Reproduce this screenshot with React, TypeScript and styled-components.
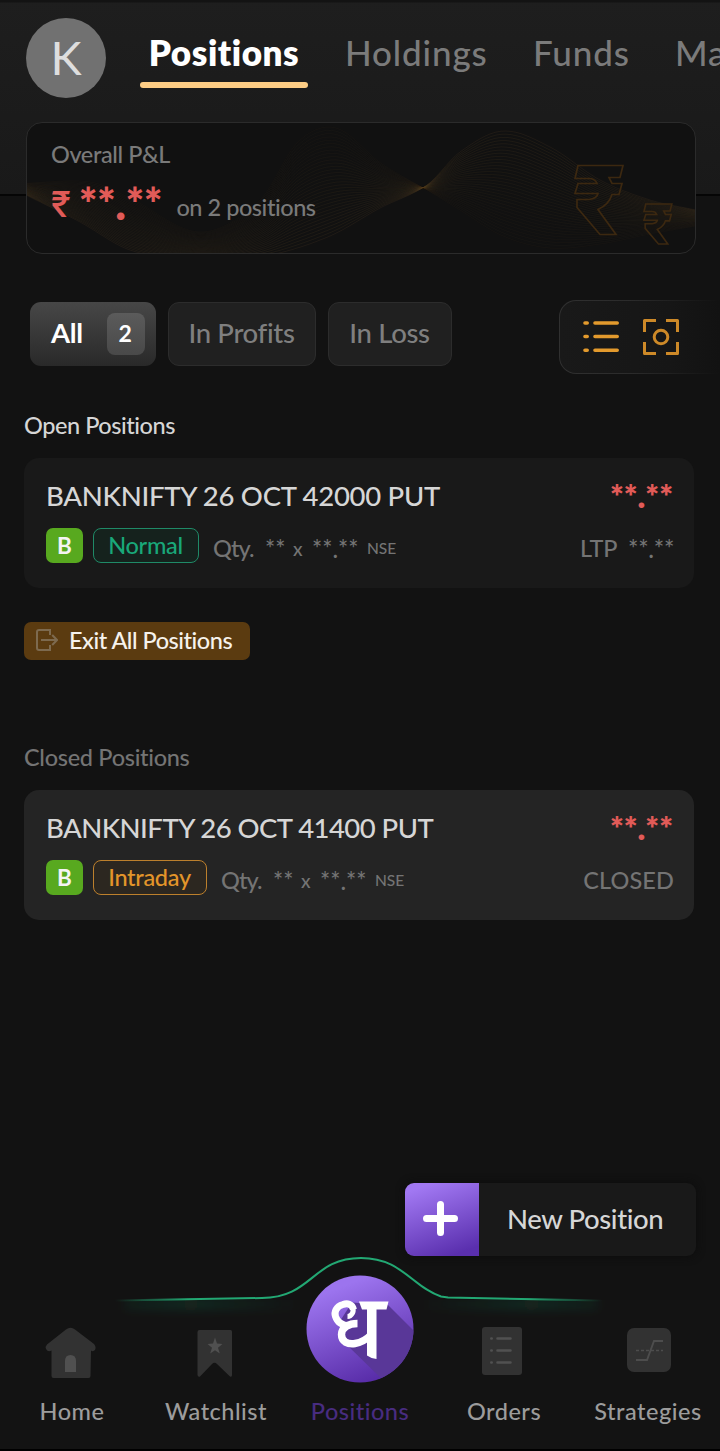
import React from "react";
import styled, { createGlobalStyle, css } from "styled-components";

const GlobalStyle = createGlobalStyle`
  * { box-sizing: border-box; }
  body { margin: 0; background: #121212; }
`;

const Screen = styled.main`
  width: 720px;
  height: 1451px;
  overflow: hidden;
  display: flex;
  flex-direction: column;
  border-bottom: 2px solid #000;
  font-family: Lato, Inter, "Liberation Sans", sans-serif;
  font-weight: 500;
  font-variant-ligatures: none;
  color: #d6d6d6;
  white-space: nowrap;
  background:
    linear-gradient(#131313, #131313 2px, transparent 3px) top / 100% 4px no-repeat,
    linear-gradient(#050505, #050505) 0 194px / 100% 2px no-repeat,
    linear-gradient(#1e1e1e, #191919) top / 100% 195px no-repeat,
    #121212;
`;

const TopBar = styled.header`
  display: flex;
  height: 122px;
  padding: 18px 0 0 26px;
`;

const Avatar = styled.div`
  flex: none;
  width: 80px;
  height: 80px;
  border-radius: 50%;
  background: #717171;
  color: #dedede;
  font-size: 47px;
  font-weight: 400;
  line-height: 79px;
  text-align: center;
`;

const Tabs = styled.nav`
  display: flex;
  margin-left: 34px;
`;

const Tab = styled.div<{ $width: number }>`
  flex: none;
  width: ${(p) => p.$width}px;
  height: 70px;
  padding-left: 6px;
  font-size: 35px;
  line-height: 69px;
  letter-spacing: 0.85px;
  color: #7b7b7b;
`;

const ActiveTab = styled.div`
  flex: none;
  width: 168px;
  height: 70px;
  margin-right: 31px;
  display: flex;
  flex-direction: column;
  align-items: center;
  justify-content: space-between;
  &::after {
    content: "";
    width: 168px;
    height: 6px;
    border-radius: 3px;
    background: #fdcd85;
  }
`;

const ActiveLabel = styled.span`
  font-size: 35px;
  line-height: 64px;
  padding-top: 2px;
  height: 64px;
  font-weight: 800;
  letter-spacing: 0.55px;
  color: #fff;
`;

const SummaryCard = styled.section`
  position: relative;
  height: 132px;
  margin: 0 24px 0 26px;
  padding: 16px 24px;
  border: 1px solid #2b2b2b;
  border-radius: 16px;
  background: #111;
  overflow: hidden;
`;

const Backdrop = styled.svg`
  position: absolute;
  left: -1px;
  top: -1px;
`;

const SummaryTitle = styled.div`
  position: relative;
  font-size: 23.5px;
  line-height: 31px;
  letter-spacing: -0.4px;
  color: #7a7a7a;
`;

const SummaryRow = styled.div`
  position: relative;
  display: flex;
  height: 60px;
  margin-top: 4px;
  line-height: 60px;
  color: #e15b58;
`;

const Rupee = styled.span`
  width: 28px;
  font-size: 36px;
  font-family: Inter, sans-serif;
  font-weight: 500;
`;

const Masked = styled.span<{ $size: number; $loss?: boolean }>`
  font-size: ${(p) => p.$size}px;
  ${(p) =>
    p.$loss &&
    css`
      color: #e15b58;
      font-weight: 800;
    `}
`;

const PositionCount = styled.span`
  margin-left: 14px;
  font-size: 23.5px;
  line-height: 66px;
  letter-spacing: -0.45px;
  color: #7a7a7a;
`;

const FilterRow = styled.div`
  display: flex;
  align-items: center;
  height: 74px;
  margin: 46px 0 0 30px;
  padding-bottom: 6px;
`;

const Chip = styled.div<{ $active?: boolean; $width: number }>`
  display: flex;
  align-items: center;
  justify-content: ${(p) => (p.$active ? "space-between" : "center")};
  width: ${(p) => p.$width}px;
  height: 64px;
  margin-right: 12px;
  padding: ${(p) => (p.$active ? "0 11px 0 21px" : "0 1px 3px 0")};
  border-radius: 11px;
  border: ${(p) => (p.$active ? "none" : "1px solid #2c2c2c")};
  background: ${(p) => (p.$active ? "linear-gradient(#474747, #292929)" : "#202020")};
  color: ${(p) => (p.$active ? "#fff" : "#7f7f7f")};
  font-size: 27.5px;
  font-weight: ${(p) => (p.$active ? 700 : 500)};
  letter-spacing: -0.35px;
`;

const ChipLabel = styled.span`
  padding-bottom: 3px;
`;

const Count = styled.span`
  width: 38px;
  height: 42px;
  padding-right: 2px;
  border-radius: 8px;
  background: linear-gradient(#5b5b5b, #494949);
  font-size: 23px;
  line-height: 41px;
  text-align: center;
`;

const ViewSwitch = styled.div`
  display: flex;
  align-items: center;
  gap: 24px;
  width: 161px;
  height: 74px;
  margin: 5px 0 0 auto;
  padding-left: 23px;
  border: 1px solid transparent;
  border-right: none;
  border-radius: 17px 0 0 17px;
  background:
    linear-gradient(90deg, #191919, #161616 70%, #121212) padding-box,
    linear-gradient(90deg, #303030, #2b2b2b 45%, #121212) border-box;
`;

const SectionTitle = styled.h2<{ $muted?: boolean }>`
  margin: ${(p) => (p.$muted ? "82px" : "36px")} 0 0 24px;
  height: 32px;
  font-size: 23.5px;
  font-weight: 500;
  line-height: 31px;
  letter-spacing: ${(p) => (p.$muted ? -0.3 : -0.45)}px;
  color: ${(p) => (p.$muted ? "#747474" : "#d6d6d6")};
`;

const PositionCard = styled.article<{ $closed?: boolean }>`
  height: 130px;
  margin: 16px 26px 0 24px;
  padding: 20px 21px 0 22px;
  border-radius: 15px;
  background: ${(p) => (p.$closed ? "#242424" : "#191919")};
`;

const Line = styled.div`
  display: flex;
  justify-content: space-between;
  height: 36px;
  line-height: 36px;
`;

const Instrument = styled.span<{ $spacing: number }>`
  font-size: 27.5px;
  letter-spacing: ${(p) => p.$spacing}px;
`;

const Details = styled.div`
  display: flex;
  align-items: center;
  height: 36px;
  margin-top: 13px;
  line-height: 35px;
  color: #747474;
`;

const Side = styled.span`
  width: 37px;
  height: 35px;
  border-radius: 7px;
  background: #58a91f;
  color: #f4f4f4;
  font-size: 22.5px;
  font-weight: 700;
  text-align: center;
`;

const Product = styled.span<{ $tone: string; $edge: string; $fill: string; $width: number }>`
  width: ${(p) => p.$width}px;
  height: 35px;
  margin: 1px 14px 0 10px;
  padding-right: 1px;
  border: 1.5px solid ${(p) => p.$edge};
  border-radius: 8px;
  background: ${(p) => p.$fill};
  color: ${(p) => p.$tone};
  font-size: 23.5px;
  line-height: 32px;
  letter-spacing: -0.3px;
  text-align: center;
`;

const Qty = styled.span<{ $size: number; $width: number }>`
  width: ${(p) => p.$width}px;
  padding-top: 6px;
  font-size: ${(p) => p.$size}px;
  letter-spacing: ${(p) => (p.$size === 23.5 ? -0.9 : 0)}px;
`;

const Status = styled.span<{ $spacing: number }>`
  display: flex;
  gap: 11px;
  margin-left: auto;
  margin-right: -1px;
  padding-top: 6px;
  font-size: 23.5px;
  letter-spacing: ${(p) => p.$spacing}px;
`;

const ExitButton = styled.button`
  display: flex;
  align-items: center;
  gap: 11px;
  width: 226px;
  height: 38px;
  margin: 34px 0 0 24px;
  padding: 0 0 2px 12px;
  border: none;
  border-radius: 7px;
  background: #5b3b10;
  color: #f6f2ec;
  font: 500 23.5px Lato, Inter, sans-serif;
  font-variant-ligatures: none;
  letter-spacing: -0.48px;
`;

const NewPosition = styled.button`
  display: flex;
  align-items: center;
  align-self: flex-end;
  width: 291px;
  height: 73px;
  margin: auto 24px 44px 0;
  padding: 0;
  border: none;
  border-radius: 9px;
  overflow: hidden;
  background: #191919;
  box-shadow: 0 0 8px #0c0c0c;
  color: #d6d6d6;
  font: 500 27.5px Lato, Inter, sans-serif;
  font-variant-ligatures: none;
  letter-spacing: -0.4px;
`;

const PlusTile = styled.span`
  display: grid;
  place-items: center;
  width: 74px;
  height: 73px;
  margin-right: 28px;
  padding: 0 3px 3px 0;
  background: linear-gradient(160deg, #a178f2 10%, #5a2fae 90%);
`;

const FabLabel = styled.span`
  padding-bottom: 2px;
`;

const BottomNav = styled.nav`
  position: relative;
  display: grid;
  grid-template-columns: repeat(5, 144px);
  height: 149px;
  background: #131313;
`;

const Glow = styled.svg`
  position: absolute;
  left: 0;
  top: -50px;
`;

const NavItem = styled.div<{ $active?: boolean; $shift?: number }>`
  position: relative;
  display: flex;
  flex-direction: column;
  align-items: center;
  padding-top: ${(p) => (p.$active ? "0" : "23px")};
  font-size: 23.5px;
  letter-spacing: 0.5px;
  line-height: 32px;
  color: ${(p) => (p.$active ? "#482c80" : "#9c9c9c")};
  svg {
    flex: none;
    margin-top: ${(p) => (p.$active ? "-25.5px" : "0")};
    margin-bottom: ${(p) => (p.$active ? "12.5px" : "16px")};
    margin-left: ${(p) => 2 * (p.$shift ?? 0)}px;
  }
`;

const lowerEdge = [
  [0, 73], [54, 100], [104, 128], [174, 140], [244, 133], [304, 114], [354, 86],
  [401, 63], [434, 30], [477, 9], [524, 25], [574, 58], [624, 78], [670, 88],
];
const upperEdge = [
  [0, 61], [64, 60], [104, 76], [174, 110], [234, 78], [272, 20], [310, 6],
  [356, 42], [401, 68], [434, 88], [477, 114], [524, 126], [574, 122], [624, 112], [670, 104],
];

const sample = (points: number[][], x: number) => {
  let i = 0;
  while (i < points.length - 2 && points[i + 1][0] < x) i++;
  const [x1, y1] = points[i];
  const [x2, y2] = points[i + 1];
  const [x0, y0] = points[Math.max(0, i - 1)];
  const [x3, y3] = points[Math.min(points.length - 1, i + 2)];
  const h = x2 - x1;
  const t = (x - x1) / h;
  const m1 = ((y2 - y0) / (x2 - x0)) * h;
  const m2 = ((y3 - y1) / (x3 - x1)) * h;
  return (
    (2 * t ** 3 - 3 * t ** 2 + 1) * y1 + (t ** 3 - 2 * t ** 2 + t) * m1 +
    (-2 * t ** 3 + 3 * t ** 2) * y2 + (t ** 3 - t ** 2) * m2
  );
};

const waves = Array.from({ length: 34 }, (_, n) => {
  const k = n / 33;
  let d = "";
  for (let x = 0; x <= 670; x += 5) {
    const y = sample(lowerEdge, x) * (1 - k) + sample(upperEdge, x) * k;
    d += `${x ? "L" : "M"}${x} ${y.toFixed(1)}`;
  }
  return { d, opacity: 0.24 - k * 0.16 };
});

const CoinOutline = () => (
  <path d="M3 0H48L45 12H34L37 18H47L44 29H37Q34 39 23 44L41 69H25L2 42V34H14Q22 33 23 28H0L3 18H22Q20 13 14 13H0Z" />
);

const WaveBackdrop = () => (
  <Backdrop width="670" height="132" viewBox="0 0 670 132" fill="none">
    {waves.map((w) => (
      <path key={w.d} d={w.d} stroke="#5e4728" strokeWidth="0.8" opacity={w.opacity} />
    ))}
    <g stroke="#3c2810" strokeWidth="1.7" transform="translate(549 43.5)">
      <CoinOutline />
    </g>
    <g stroke="#3c2810" strokeWidth="2.8" transform="translate(618 82) scale(.58)">
      <CoinOutline />
    </g>
  </Backdrop>
);

const ListIcon = () => (
  <svg width="36" height="36" viewBox="0 0 36 36" stroke="#e39a2d" strokeWidth="3.6" strokeLinecap="round">
    <path d="M2 4h2.200M12 4h22.200M2 17.500h2.200M12 17.500h22.200M2 31.200h2.200M12 31.200h22.200" />
  </svg>
);

const FocusIcon = () => (
  <svg width="36" height="36" viewBox="0 0 36 36" fill="none" stroke="#cd8928" strokeWidth="3" strokeLinejoin="round">
    <path d="M1.500 13V1.500H13M23 1.500h11.500V13M34.500 23v11.500H23M13 34.500H1.500V23" />
    <circle cx="18" cy="18" r="6.800" />
  </svg>
);

const ExitIcon = () => (
  <svg width="22" height="22" viewBox="0 0 22 22" fill="none" stroke="#7d6a4f" strokeWidth="2">
    <path d="M14 6V1H3Q1 1 1 3V19Q1 21 3 21H14V16M5 11H21M16.200 6L21 11L16.200 16" />
  </svg>
);

const PlusIcon = () => (
  <svg width="35" height="35" viewBox="0 0 35 35" stroke="#fff" strokeWidth="7" strokeLinecap="round">
    <path d="M17.500 3.500v28M3.500 17.500h28" />
  </svg>
);

const HomeIcon = () => (
  <svg width="52" height="56" viewBox="0 0 52 56">
    <path
      d="M21 6.500Q25.500 3 30 6.500L49 21Q51.500 24 50 27Q48 29 46 27.500L45.500 53Q45.500 55 43.500 55H8.500Q6.500 55 6.500 53V27.500Q3 29.500 1 26Q0 23.500 2 21.500Z"
      fill="#323232"
    />
    <path d="M20 49V38Q20 32 25.500 32Q31 32 31 38V49Z" fill="#505050" />
  </svg>
);

const WatchlistIcon = () => (
  <svg width="36" height="56" viewBox="0 0 36 56">
    <path d="M2.500 7H33.500Q35 7 35 8.500V52Q35 54.500 33 53.500L20 41Q17.500 38.500 15 41L3 53.500Q1 54.500 0.500 52V9Q0.500 7 2.500 7Z" fill="#323232" />
    <path d="M18 14.500L20 20.500L25.500 21L21 24.700L22.800 30.500L18 27.300L13.200 30.500L15 24.700L10.500 21L16 20.500Z" fill="#505050" />
  </svg>
);

const OrdersIcon = () => (
  <svg width="40" height="56" viewBox="0 0 40 56">
    <rect y="4" width="40" height="48" rx="3" fill="#323232" />
    <g stroke="#515151" strokeWidth="2.600" strokeLinecap="round">
      <path d="M9.300 15.500h.4M15.500 15.500h13M9.300 27.500h.4M15.500 27.500h13M9.300 39.500h.4M15.500 39.500h13" />
    </g>
  </svg>
);

const StrategiesIcon = () => (
  <svg width="44" height="56" viewBox="0 0 44 56" fill="none" stroke="#4d4d4d">
    <rect y="5" width="44" height="44" rx="7" fill="#323232" stroke="none" />
    <path d="M9 37H20L27 18H36" strokeWidth="1.900" />
    <path d="M9 27.500H36" strokeWidth="1.300" strokeDasharray="3 2" />
  </svg>
);

const BrandMark = () => (
  <svg width="108" height="108" viewBox="0 0 108 108">
    <defs>
      <linearGradient id="disc" x1=".3" y1="0" x2=".7" y2="1">
        <stop offset=".1" stopColor="#9c74ee" />
        <stop offset="1" stopColor="#5529a5" />
      </linearGradient>
      <clipPath id="discClip">
        <circle cx="54" cy="54" r="53.500" />
      </clipPath>
    </defs>
    <circle cx="54" cy="54" r="53.500" fill="url(#disc)" />
    <path d="M46 27.500L82 30L112 60V108H80L40 69L34 46Z" fill="#593798" clipPath="url(#discClip)" />
    <g fill="none" stroke="#fff">
      <path d="M41.500 41.500C45.500 41.500 48.500 36.500 46.500 32.500" strokeWidth="5" />
      <path d="M47.500 34.500C46 28.500 41 28 37 29.500C30 31.500 28 37 29.500 41.500C31.500 47.500 36 50.500 43 50.500" strokeWidth="7" />
      <path d="M51.500 48.500C43 48.500 35.500 52.500 35.500 59.500C35.500 67 42 69.500 49 68.500C56 67.500 61 64 66 59" strokeWidth="7.400" />
    </g>
    <path d="M53 26.500H82.500L80.500 34.500H70.500V84Q65 83.500 61 80.500V34.500H56Z" fill="#fff" />
  </svg>
);

const NavGlow = () => (
  <Glow width="720" height="100" viewBox="0 0 720 100" fill="none">
    <defs>
      <linearGradient id="line" gradientUnits="userSpaceOnUse" x1="115" y1="0" x2="602" y2="0">
        <stop offset="0" stopColor="#22a873" stopOpacity="0" />
        <stop offset=".15" stopColor="#22a873" />
        <stop offset=".85" stopColor="#22a873" />
        <stop offset="1" stopColor="#22a873" stopOpacity="0" />
      </linearGradient>
      <linearGradient id="halo" gradientUnits="userSpaceOnUse" x1="120" y1="0" x2="602" y2="0">
        <stop offset="0" stopColor="#1c9464" stopOpacity=".08" />
        <stop offset=".15" stopColor="#1c9464" stopOpacity=".17" />
        <stop offset=".38" stopColor="#1c9464" stopOpacity="0" />
        <stop offset=".62" stopColor="#1c9464" stopOpacity="0" />
        <stop offset=".85" stopColor="#1c9464" stopOpacity=".17" />
        <stop offset="1" stopColor="#1c9464" stopOpacity=".08" />
      </linearGradient>
      <filter id="soft" x="-10%" y="-200%" width="120%" height="500%">
        <feGaussianBlur stdDeviation="5" />
      </filter>
      <clipPath id="below">
        <rect y="50" width="720" height="50" />
      </clipPath>
    </defs>
    <g clipPath="url(#below)">
      <rect x="125" y="48" width="473" height="12" fill="url(#halo)" filter="url(#soft)" />
    </g>
    <path
      d="M115 50.500L262 48C312 48 312 8 361 8C402 8 412 37 441 46.500L448 47.500L602 50.500"
      stroke="url(#line)"
      strokeWidth="2"
    />
  </Glow>
);

type PositionProps = {
  name: string;
  spacing: number;
  product: string;
  tone: string;
  edge: string;
  fill: string;
  width: number;
  closed?: boolean;
};

const Position = ({ name, spacing, product, tone, edge, fill, width, closed }: PositionProps) => (
  <PositionCard $closed={closed}>
    <Line>
      <Instrument $spacing={spacing}>{name}</Instrument>
      <Masked $size={32.5} $loss>**.**</Masked>
    </Line>
    <Details>
      <Side>B</Side>
      <Product $tone={tone} $edge={edge} $fill={fill} $width={width}>{product}</Product>
      <Qty $size={23.5} $width={52}>Qty.</Qty>
      <Qty $size={24} $width={28}>**</Qty>
      <Qty $size={19} $width={19}>x</Qty>
      <Qty $size={24} $width={55}>**.**</Qty>
      <Qty $size={15.5} $width={40}>NSE</Qty>
      <Status $spacing={closed ? 0.1 : -0.3}>
        {closed ? (
          "CLOSED"
        ) : (
          <>
            <span>LTP</span>
            <Masked $size={24.5}>**.**</Masked>
          </>
        )}
      </Status>
    </Details>
  </PositionCard>
);

export default function App() {
  return (
    <Screen>
      <GlobalStyle />
      <TopBar>
        <Avatar>K</Avatar>
        <Tabs>
          <ActiveTab>
            <ActiveLabel>Positions</ActiveLabel>
          </ActiveTab>
          <Tab $width={188}>Holdings</Tab>
          <Tab $width={142}>Funds</Tab>
          <Tab $width={160}>Markets</Tab>
        </Tabs>
      </TopBar>
      <SummaryCard>
        <WaveBackdrop />
        <SummaryTitle>Overall P&amp;L</SummaryTitle>
        <SummaryRow>
          <Rupee>₹</Rupee>
          <Masked $size={43} $loss>**.**</Masked>
          <PositionCount>on 2 positions</PositionCount>
        </SummaryRow>
      </SummaryCard>
      <FilterRow>
        <Chip $active $width={126}>
          <ChipLabel>All</ChipLabel>
          <Count>2</Count>
        </Chip>
        <Chip $width={148}>In Profits</Chip>
        <Chip $width={124}>In Loss</Chip>
        <ViewSwitch>
          <ListIcon />
          <FocusIcon />
        </ViewSwitch>
      </FilterRow>
      <SectionTitle>Open Positions</SectionTitle>
      <Position
        name="BANKNIFTY 26 OCT 42000 PUT"
        spacing={-0.28}
        product="Normal"
        tone="#19a879"
        edge="#1f8a67"
        fill="#15221d"
        width={106}
      />
      <ExitButton>
        <ExitIcon />
        Exit All Positions
      </ExitButton>
      <SectionTitle $muted>Closed Positions</SectionTitle>
      <Position
        name="BANKNIFTY 26 OCT 41400 PUT"
        spacing={-0.54}
        product="Intraday"
        tone="#e3952a"
        edge="#bd802c"
        fill="#2c2720"
        width={114}
        closed
      />
      <NewPosition>
        <PlusTile>
          <PlusIcon />
        </PlusTile>
        <FabLabel>New Position</FabLabel>
      </NewPosition>
      <BottomNav>
        <NavGlow />
        <NavItem $shift={-1}>
          <HomeIcon />
          Home
        </NavItem>
        <NavItem $shift={-1}>
          <WatchlistIcon />
          Watchlist
        </NavItem>
        <NavItem $active $shift={-0.5}>
          <BrandMark />
          Positions
        </NavItem>
        <NavItem $shift={-2}>
          <OrdersIcon />
          Orders
        </NavItem>
        <NavItem $shift={1}>
          <StrategiesIcon />
          Strategies
        </NavItem>
      </BottomNav>
    </Screen>
  );
}
